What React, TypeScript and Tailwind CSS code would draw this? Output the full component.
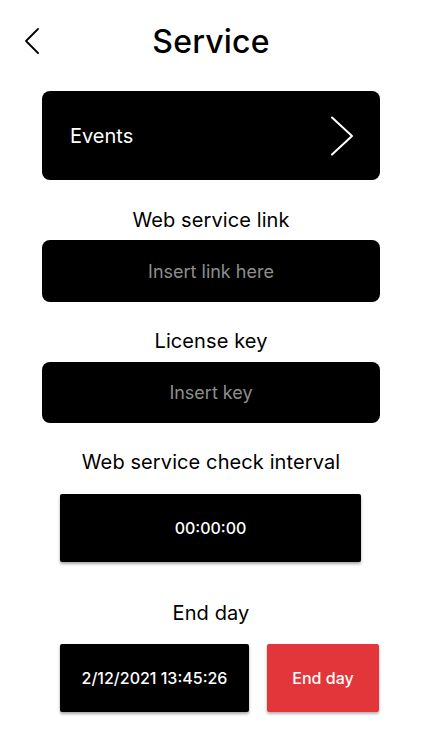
import React from "react";

const sans = { fontFamily: "Inter, 'Noto Sans', sans-serif" };

function Label({ children }: { children: React.ReactNode }) {
  return (
    <div className="text-[20px] leading-[24px] text-black text-center tracking-[0.1px]" style={sans}>
      {children}
    </div>
  );
}

export default function App() {
  return (
    <div className="w-[422px] h-[750px] bg-white flex flex-col items-stretch px-[42px]" style={sans}>
      <div className="relative h-[84px] flex items-center justify-center">
        <button className="absolute left-[-18px] top-[28px] w-[15px] h-[26px]" aria-label="Back">
          <svg width="15" height="26" viewBox="0 0 15 26" fill="none">
            <path d="M14 1 L2 13 L14 25" stroke="#000" strokeWidth="1.8" strokeLinecap="round" strokeLinejoin="round" />
          </svg>
        </button>
        <h1 className="text-[32px] leading-none font-medium text-black tracking-[0.2px]">Service</h1>
      </div>

      <div className="mt-[7px] h-[89px] rounded-[8px] bg-black flex items-center justify-between pl-[28px] pr-[26px]">
        <span className="text-white text-[20px]">Events</span>
        <svg width="24" height="40" viewBox="0 0 24 40" fill="none">
          <path d="M2 1.5 L22 20 L2 38.5" stroke="#fff" strokeWidth="2" strokeLinecap="round" strokeLinejoin="round" />
        </svg>
      </div>

      <div className="mt-[28px]">
        <Label>Web service link</Label>
      </div>
      <div className="mt-[8px] h-[62px] rounded-[8px] bg-black flex items-center justify-center">
        <span className="text-[18px] text-[#8e8e8e]">Insert link here</span>
      </div>

      <div className="mt-[27px]">
        <Label>License key</Label>
      </div>
      <div className="mt-[9px] h-[61px] rounded-[8px] bg-black flex items-center justify-center">
        <span className="text-[18px] text-[#8e8e8e]">Insert key</span>
      </div>

      <div className="mt-[27px]">
        <Label>Web service check interval</Label>
      </div>
      <div className="mt-[20px] ml-[18px] w-[301px] h-[68px] rounded-[2px] bg-black flex items-center justify-center shadow-[0_2px_3px_rgba(0,0,0,0.35)]">
        <span className="text-white text-[16px] font-medium" style={sans}>00:00:00</span>
      </div>

      <div className="mt-[39px]">
        <Label>End day</Label>
      </div>
      <div className="mt-[19px] ml-[18px] flex gap-[18px]">
        <div className="w-[189px] h-[68px] rounded-[2px] bg-black flex items-center justify-center shadow-[0_2px_3px_rgba(0,0,0,0.35)]">
          <span className="text-white text-[16px] font-medium" style={sans}>2/12/2021 13:45:26</span>
        </div>
        <button className="w-[112px] h-[68px] rounded-[2px] bg-[#e2363a] flex items-center justify-center shadow-[0_2px_3px_rgba(0,0,0,0.3)]">
          <span className="text-white text-[16px] font-medium" style={sans}>End day</span>
        </button>
      </div>
    </div>
  );
}
